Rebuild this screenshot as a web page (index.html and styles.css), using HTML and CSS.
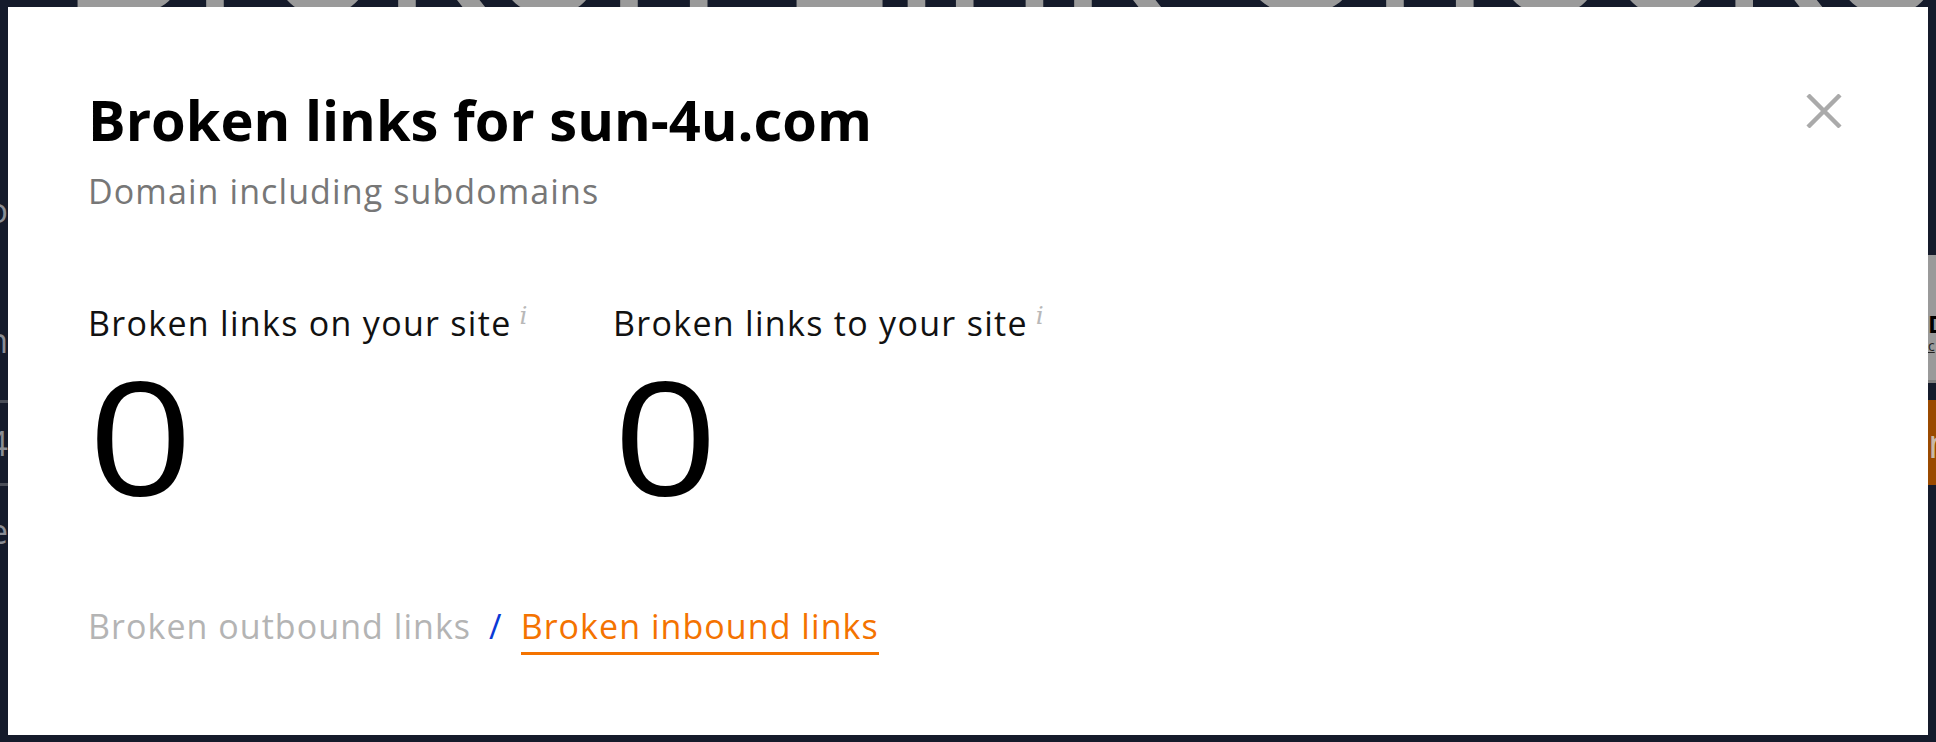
FILE: index.html
```html
<!DOCTYPE html>
<html lang="en">
<head>
<meta charset="utf-8">
<title>Broken links for sun-4u.com</title>
<link rel="stylesheet" href="styles.css">
</head>
<body>
<div class="page">
  <div class="hero">Broken Link Checker</div>
  <div class="side-left">
    <span class="frag f1">o</span>
    <span class="frag f2">n</span>
    <span class="rule r1"></span>
    <span class="frag f3">4</span>
    <span class="rule r2"></span>
    <span class="frag f4">e</span>
  </div>
  <div class="side-right">
    <div class="panel"><b>D</b><u>c</u></div>
    <div class="btn">n</div>
  </div>
</div>

<div class="modal">
  <button class="close" aria-label="Close">
    <svg viewBox="0 0 36 34" width="36" height="34"><path d="M2 1 L34 33 M34 1 L2 33" stroke="#aaaaaa" stroke-width="4.4" fill="none"/></svg>
  </button>
  <h1 class="title">Broken links for sun-4u.com</h1>
  <p class="subtitle">Domain including subdomains</p>

  <div class="stats">
    <div class="stat">
      <div class="stat-label">Broken links on your site<sup class="info">i</sup></div>
      <div class="stat-value">0</div>
    </div>
    <div class="stat">
      <div class="stat-label">Broken links to your site<sup class="info">i</sup></div>
      <div class="stat-value">0</div>
    </div>
  </div>

  <div class="tabs">
    <span class="tab">Broken outbound links</span>
    <span class="sep">/</span>
    <span class="tab active">Broken inbound links</span>
  </div>
</div>
</body>
</html>
```
FILE: styles.css
```css
html, body {
  margin: 0;
  padding: 0;
}
body {
  background: #151b2b;
  width: 1936px;
  height: 742px;
  overflow: hidden;
  position: relative;
  font-family: "Open Sans", Roboto, "Liberation Sans", sans-serif;
}

.page {
  height: 742px;
  position: relative;
  display: flow-root;
}
.hero {
  font-family: Inter, Roboto, sans-serif;
  font-size: 200px;
  line-height: 1;
  color: #9a9a9a;
  white-space: nowrap;
  margin-top: -160px;
  padding-left: 60px;
}
.side-left {
  position: absolute;
  left: -12px;
  top: 180px;
  width: 20px;
  color: #8a8d94;
  font-size: 34px;
  display: flex;
  flex-direction: column;
  align-items: flex-end;
}
.frag { display: block; line-height: 40px; }
.f1 { margin-top: 10px; }
.f2 { margin-top: 90px; }
.rule { display: block; width: 20px; height: 3px; background: #4a4e58; }
.r1 { margin-top: 40px; }
.f3 { margin-top: 20px; }
.r2 { margin-top: 20px; }
.f4 { margin-top: 25px; }

.side-right {
  position: absolute;
  left: 1928px;
  top: 255px;
  width: 40px;
}
.panel {
  height: 128px;
  background: #9a9a9a;
  border-bottom: 3px solid #808080;
  box-sizing: border-box;
  padding-top: 58px;
  display: flex;
  flex-direction: column;
  line-height: 22px;
}
.panel b { color: #000; font-size: 24px; }
.panel u { color: #222; font-size: 14px; }
.btn {
  margin-top: 17px;
  height: 85px;
  background: #9a4a00;
  color: #c9b8a8;
  font-size: 40px;
  line-height: 85px;
}

.modal {
  position: absolute;
  left: 8px;
  top: 7px;
  width: 1920px;
  height: 728px;
  background: #ffffff;
  box-sizing: border-box;
  padding: 76px 0 0 80px;
  color: #000;
}
.close {
  position: absolute;
  right: 86px;
  top: 87px;
  border: 0;
  background: none;
  padding: 0;
  width: 36px;
  height: 34px;
  cursor: pointer;
}
.close svg { display: block; }

.title {
  margin: 0;
  font-size: 56px;
  font-weight: 700;
  line-height: 72px;
  letter-spacing: 0;
}
.subtitle {
  margin: 14px 0 0;
  font-size: 34px;
  line-height: 44px;
  color: #777777;
  letter-spacing: 1.1px;
}

.stats {
  display: flex;
  margin-top: 90px;
}
.stat {
  width: 525px;
}
.stat-label {
  font-size: 34px;
  line-height: 40px;
  color: #111;
  white-space: nowrap;
  letter-spacing: 1.3px;
}
.info {
  font-family: "DejaVu Serif", serif;
  font-style: italic;
  font-size: 25px;
  line-height: 1;
  color: #b8b8b8;
  vertical-align: 12px;
  margin-left: 8px;
  letter-spacing: 0;
}
.stat-value {
  font-size: 157px;
  font-weight: 500;
  line-height: 160px;
  margin-top: 11px;
  transform: scaleX(1.17);
  transform-origin: 0 50%;
  width: max-content;
}

.tabs {
  margin-top: 92px;
  font-size: 34px;
  line-height: 40px;
  display: flex;
  gap: 18px;
  align-items: flex-start;
  letter-spacing: 1.05px;
}
.tab { color: #b4b4b4; }
.sep { color: #0a3ad6; }
.tab.active {
  color: #f47300;
  border-bottom: 3px solid #f47300;
  padding-bottom: 6px;
}
```
